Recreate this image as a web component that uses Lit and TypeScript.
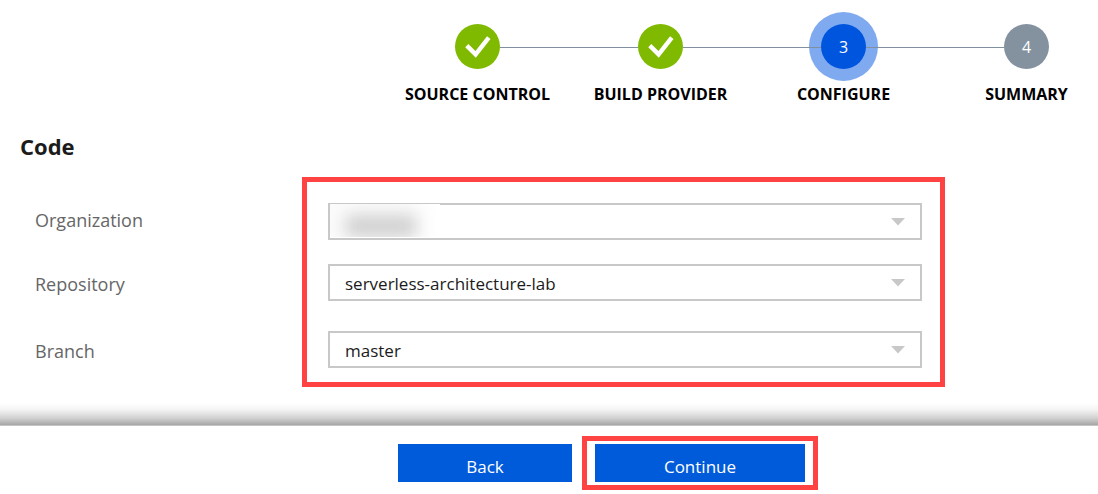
import { LitElement, html, css, nothing } from "lit";
import { customElement, property } from "lit/decorators.js";

type StepState = "done" | "current" | "pending";

interface Step {
  label: string;
  state: StepState;
}

interface Field {
  id: string;
  label: string;
  value: string;
  redacted?: boolean;
}

const STEPS: Step[] = [
  { label: "SOURCE CONTROL", state: "done" },
  { label: "BUILD PROVIDER", state: "done" },
  { label: "CONFIGURE", state: "current" },
  { label: "SUMMARY", state: "pending" },
];

const FIELDS: Field[] = [
  { id: "organization", label: "Organization", value: "", redacted: true },
  { id: "repository", label: "Repository", value: "serverless-architecture-lab" },
  { id: "branch", label: "Branch", value: "master" },
];

@customElement("wizard-steps")
export class WizardSteps extends LitElement {
  @property({ attribute: false }) steps: Step[] = [];

  static styles = css`
    :host {
      display: block;
    }
    .steps {
      display: flex;
      margin: 0;
      padding: 0;
      list-style: none;
    }
    .step {
      display: flex;
      flex-direction: column;
      align-items: center;
      width: 45px;
      gap: 13px;
    }
    .line {
      position: relative;
      flex: 1;
      height: 1px;
      margin-top: 23px;
      background: #8090a0;
      z-index: 1;
    }
    .dot {
      display: flex;
      align-items: center;
      justify-content: center;
      width: 45px;
      height: 45px;
      border-radius: 50%;
      color: #fff;
      font-size: 16px;
      line-height: 24px;
    }
    .done {
      background: #7fba00;
    }
    .current {
      background: #0055df;
      box-shadow: 0 0 0 12px rgba(0, 85, 223, 0.5);
    }
    .pending {
      background: #84929f;
    }
    .name {
      color: #000;
      font-size: 16px;
      font-weight: 700;
      line-height: 24px;
      white-space: nowrap;
    }
  `;

  render() {
    return html`
      <ol class="steps">
        ${this.steps.map(
          (step, i) => html`
            ${i > 0 ? html`<li class="line" role="presentation"></li>` : nothing}
            <li class="step" aria-current=${step.state === "current" ? "step" : nothing}>
              <span class="dot ${step.state}">
                ${step.state === "done"
                  ? html`<svg width="45" height="45" viewBox="0 0 45 45" aria-hidden="true">
                      <path d="M11.8 21.6 L20.6 30.4 L33.8 13.6" fill="none" stroke="#fff" stroke-width="4.4" />
                    </svg>`
                  : i + 1}
              </span>
              <span class="name">${step.label}</span>
            </li>
          `
        )}
      </ol>
    `;
  }
}

@customElement("app-root")
export class AppRoot extends LitElement {
  static styles = css`
    :host {
      display: flex;
      flex-direction: column;
      box-sizing: border-box;
      min-height: 100vh;
      background: #fff;
      font-family: "Segoe UI", "Open Sans", "Noto Sans", sans-serif;
    }
    .progress {
      padding: 24px 49px 0 455px;
    }
    .code {
      padding: 24px 176px 0 20px;
    }
    .title {
      margin: 0;
      color: #1b1b1b;
      font-size: 22px;
      font-weight: 700;
      line-height: 32px;
    }
    .fields {
      display: grid;
      grid-template-columns: 293px 1fr;
      row-gap: 24px;
      padding: 41px 0 0 15px;
    }
    .label {
      grid-column: 1;
      align-self: end;
      color: #666;
      font-size: 18px;
      line-height: 34px;
    }
    .label.row-1 {
      align-self: start;
    }
    .control {
      position: relative;
      grid-column: 2;
      display: grid;
    }
    .row-1 {
      grid-row: 1;
    }
    .row-2 {
      grid-row: 2;
    }
    .row-3 {
      grid-row: 3;
      margin-top: 6px;
    }
    .select {
      appearance: none;
      box-sizing: border-box;
      width: 100%;
      height: 37px;
      padding: 2px 40px 0 15px;
      border: 2px solid #c8c8c8;
      border-radius: 0;
      background: #fff;
      color: #1b1b1b;
      font-family: inherit;
      font-size: 17px;
    }
    .arrow {
      position: absolute;
      top: 15px;
      right: 17px;
      pointer-events: none;
    }
    .redaction {
      position: absolute;
      inset: 1px auto 3px 2px;
      width: 110px;
      overflow: hidden;
      background: linear-gradient(to right, #fbfbfb 70%, #fff);
      pointer-events: none;
    }
    .smudge {
      position: absolute;
      inset: 11px 24px 0 16px;
      background: #d0d0d0;
      filter: blur(8px);
    }
    .frame {
      border: 5px solid #ff4343;
    }
    .fields-frame {
      grid-column: 2;
      grid-row: 1 / 4;
      z-index: 1;
      margin: -26px -23px -19px -26px;
      pointer-events: none;
    }
    .footer {
      margin-top: auto;
    }
    .shade {
      height: 22px;
      border-bottom: 1px solid #c4c4c4;
      background: linear-gradient(#fff, #f4f4f4 30%, #d2d2d2 68%, #a6a6a6);
    }
    .actions {
      display: flex;
      align-items: center;
      gap: 10px;
      padding: 10px 0 4px 398px;
    }
    .continue-frame {
      padding: 3px 8px;
    }
    .button {
      display: block;
      width: 174px;
      height: 38px;
      padding: 7px 0 0;
      border: 0;
      background: #005bda;
      color: #fff;
      font-family: inherit;
      font-size: 17px;
      line-height: 24px;
    }
    .primary {
      width: 210px;
    }
  `;

  private field(field: Field, index: number) {
    const row = `row-${index + 1}`;
    return html`
      <label class="label ${row}" for=${field.id}>${field.label}</label>
      <div class="control ${row}">
        <select class="select" id=${field.id}>
          <option>${field.value}</option>
        </select>
        ${field.redacted
          ? html`<div class="redaction"><div class="smudge"></div></div>`
          : nothing}
        <svg class="arrow" width="14" height="8" viewBox="0 0 14 8" aria-hidden="true">
          <path d="M0 0 H14 L7 7.5 Z" fill="#c8c8c8" />
        </svg>
      </div>
    `;
  }

  render() {
    return html`
      <nav class="progress" aria-label="Progress">
        <wizard-steps .steps=${STEPS}></wizard-steps>
      </nav>
      <main class="code">
        <h1 class="title">Code</h1>
        <form class="fields">
          ${FIELDS.map((f, i) => this.field(f, i))}
          <div class="frame fields-frame"></div>
        </form>
      </main>
      <footer class="footer">
        <div class="shade"></div>
        <div class="actions">
          <button class="button" type="button">Back</button>
          <div class="frame continue-frame">
            <button class="button primary" type="button">Continue</button>
          </div>
        </div>
      </footer>
    `;
  }
}
